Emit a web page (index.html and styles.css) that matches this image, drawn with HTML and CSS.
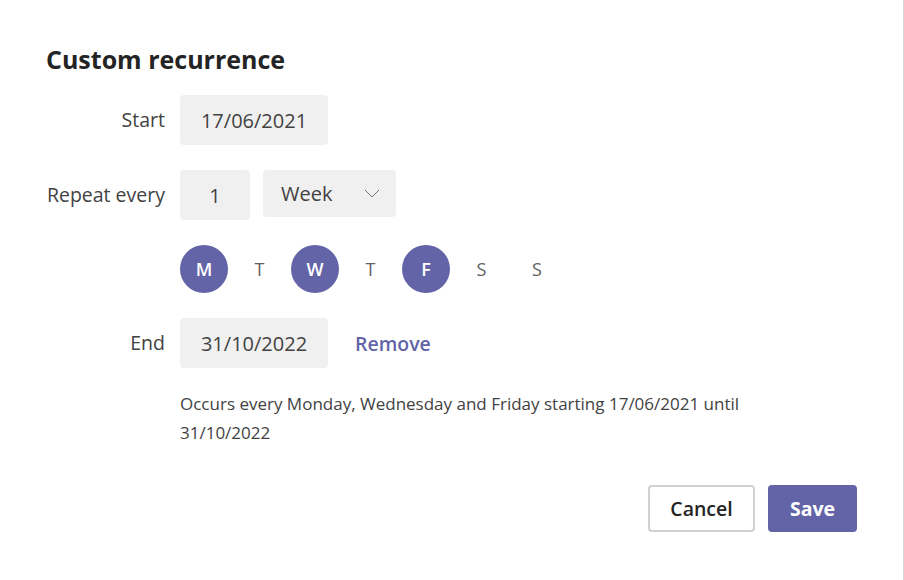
FILE: index.html
```html
<!DOCTYPE html>
<html lang="en">
<head>
    <meta charset="UTF-8">
    <meta name="viewport" content="width=device-width, initial-scale=1.0">
    <title>Custom recurrence</title>
    <link rel="stylesheet" href="styles.css">
</head>
<body>
    <div class="dialog">
        <h1>Custom recurrence</h1>
        <div class="form">
            <label class="label">Start</label>
            <div class="controls">
                <div class="field date">17/06/2021</div>
            </div>

            <label class="label">Repeat every</label>
            <div class="controls">
                <div class="field count">1</div>
                <div class="field select">
                    <span>Week</span>
                    <svg width="16" height="9" viewBox="0 0 16 9"><path d="M1 1l7 7 7-7" fill="none" stroke="#757575" stroke-width="1"/></svg>
                </div>
            </div>

            <span></span>
            <div class="days">
                <button class="day on">M</button>
                <button class="day">T</button>
                <button class="day on">W</button>
                <button class="day">T</button>
                <button class="day on">F</button>
                <button class="day">S</button>
                <button class="day">S</button>
            </div>

            <label class="label">End</label>
            <div class="controls">
                <div class="field date">31/10/2022</div>
                <a class="remove" href="#">Remove</a>
            </div>

            <span></span>
            <p class="summary">Occurs every Monday, Wednesday and Friday starting 17/06/2021 until 31/10/2022</p>
        </div>
        <div class="actions">
            <button class="btn cancel">Cancel</button>
            <button class="btn save">Save</button>
        </div>
    </div>
</body>
</html>
```

FILE: styles.css
```css
body {
    margin: 0;
    background: #fff;
    font-family: 'Open Sans', sans-serif;
    color: #424242;
}
.dialog {
    width: 904px;
    height: 580px;
    box-sizing: border-box;
    border-right: 1px solid #d6d6d6;
    padding: 43px 46px 0 46px;
}
h1 {
    margin: 0;
    font-size: 25px;
    line-height: 32px;
    font-weight: 700;
    color: #242424;
}
.form {
    display: grid;
    grid-template-columns: 119px auto;
    column-gap: 15px;
    row-gap: 25px;
    margin-top: 20px;
    align-items: center;
}
.label {
    text-align: right;
    font-size: 19.5px;
    white-space: nowrap;
    padding-bottom: 2px;
}
.controls {
    display: flex;
    align-items: center;
    gap: 13px;
}
.field {
    background: #f0f0f0;
    border-radius: 4px;
    height: 50px;
    display: flex;
    align-items: center;
    font-size: 20px;
    color: #424242;
    box-sizing: border-box;
}
.date {
    width: 148px;
    justify-content: center;
}
.count {
    width: 70px;
    justify-content: center;
}
.select {
    width: 133px;
    height: 47px;
    justify-content: space-between;
    padding: 0 16px 0 18px;
    align-self: flex-start;
}
.days {
    display: flex;
    gap: 7.5px;
}
.day {
    width: 48px;
    height: 48px;
    border: none;
    border-radius: 50%;
    background: transparent;
    font-family: inherit;
    font-size: 18px;
    color: #616161;
    padding: 0;
}
.day.on {
    background: #6264a7;
    color: #fff;
    font-weight: 600;
}
.remove {
    margin-left: 14px;
    color: #6264a7;
    font-weight: 600;
    font-size: 19.5px;
    text-decoration: none;
    padding-top: 1px;
}
.summary {
    margin: -4px 0 0;
    font-size: 17px;
    line-height: 29px;
    max-width: 600px;
}
.actions {
    display: flex;
    justify-content: flex-end;
    gap: 13px;
    margin-top: 38px;
}
.btn {
    font-family: inherit;
    font-size: 19.5px;
    font-weight: 600;
    border-radius: 4px;
    height: 47px;
    cursor: pointer;
}
.cancel {
    width: 107px;
    background: #fff;
    border: 2px solid #d1d1d1;
    color: #242424;
}
.save {
    width: 89px;
    background: #6264a7;
    border: none;
    color: #fff;
    font-weight: 700;
}
```
